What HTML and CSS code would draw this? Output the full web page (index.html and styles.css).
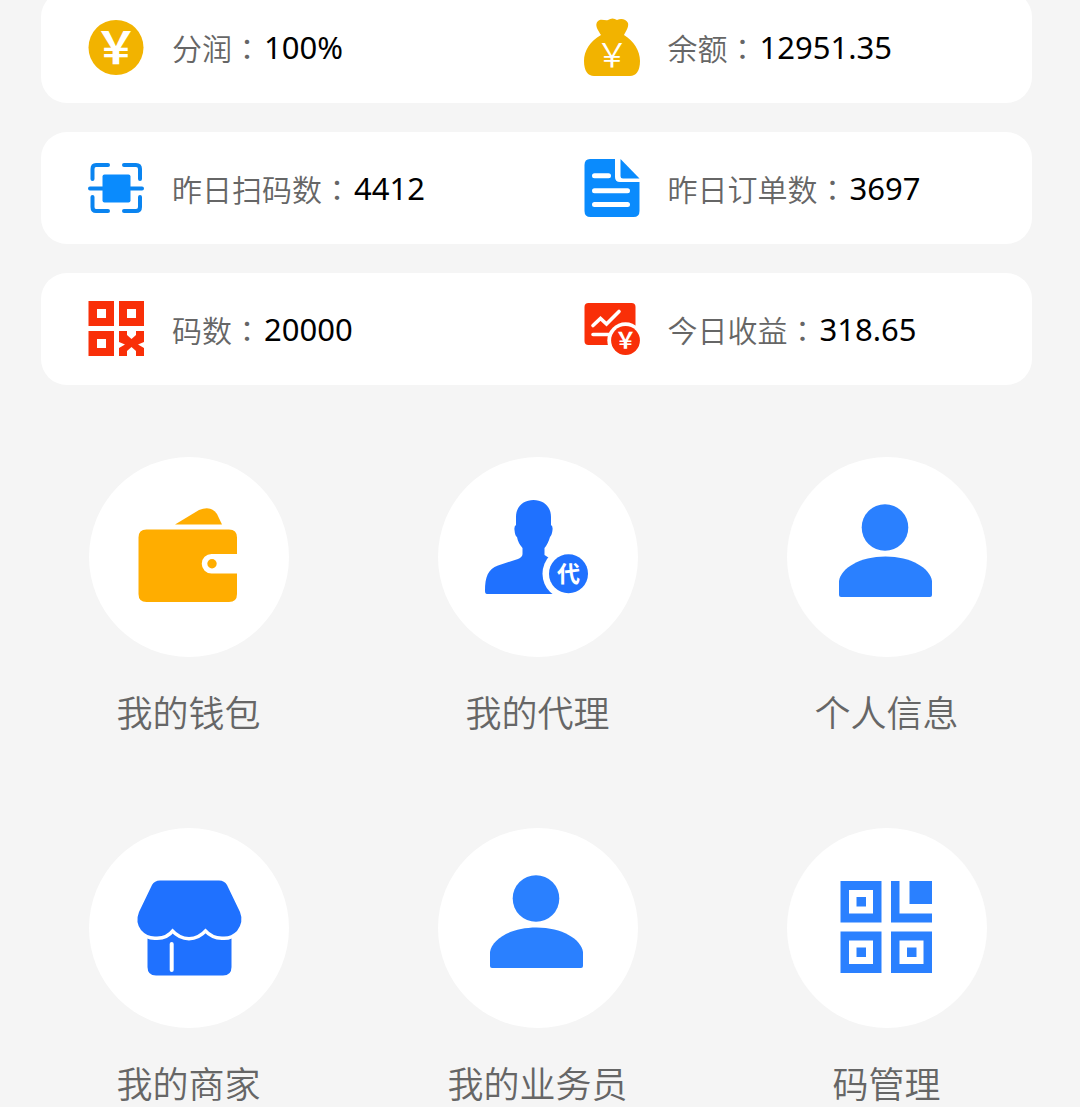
FILE: index.html
```html
<!DOCTYPE html>
<html lang="zh-CN">
<head>
    <meta charset="UTF-8">
    <meta name="viewport" content="width=device-width, initial-scale=1.0">
    <title>我的</title>
    <link rel="stylesheet" href="styles.css">
</head>
<body>
    <svg class="sprite" aria-hidden="true">
        <symbol id="person" viewBox="0 0 200 200">
            <circle cx="98" cy="70.5" r="23.3"/>
            <path d="M52 124C54 111 73 99.5 98.500 99.5S143 111 145 124V138Q145 140 143 140H54Q52 140 52 138Z"/>
        </symbol>
    </svg>

    <main>
        <section class="stats">
            <div class="card">
                <div class="stat">
                    <svg class="stat-icon gold" viewBox="0 0 56 56" aria-hidden="true">
                        <circle cx="28" cy="28.500" r="27.5"/>
                        <text class="yen" x="28" y="45" font-size="44">￥</text>
                    </svg>
                    <p><span class="label">分润<span class="colon" lang="zh-TW">：</span></span><span class="value">100%</span></p>
                </div>
                <div class="stat">
                    <svg class="stat-icon gold" viewBox="0 0 56 56" aria-hidden="true">
                        <path d="M17 16C14 11 10 6 14 2C17 -1 21 2 24 1C27 -1 30 -1 33 1C37 -1 42 0 44 4C45 8 42 12 40 16C50 22 56 32 56 42C56 52 52 57 46 57H10C4 57 0 52 0 42C0 32 6 22 17 16Z"/>
                        <text class="yen thin" x="28" y="48" font-size="33">￥</text>
                    </svg>
                    <p><span class="label">余额<span class="colon" lang="zh-TW">：</span></span><span class="value">12951.35</span></p>
                </div>
            </div>
            <div class="card">
                <div class="stat">
                    <svg class="stat-icon azure" viewBox="0 0 56 56" aria-hidden="true">
                        <path class="line" stroke-width="4" d="M20 5H8Q4.500 5 4.500 9V19M36 5H48Q52 5 52 9V19M4.500 37V47Q4.500 51 8 51H20M52 37V47Q52 51 48 51H36M2 28.500H54"/>
                        <rect x="14.500" y="14.500" width="28" height="28" rx="2"/>
                    </svg>
                    <p><span class="label">昨日扫码数<span class="colon" lang="zh-TW">：</span></span><span class="value">4412</span></p>
                </div>
                <div class="stat">
                    <svg class="stat-icon azure" viewBox="0 0 56 56" aria-hidden="true">
                        <path d="M6 -1H31V17Q31 22 36 22H55.500V51Q55.500 57 49.500 57H6.500Q.5 57 .5 51V5Q.5 -1 6 -1Z"/>
                        <path d="M36.500 -1L55.500 18.500H39Q36.500 18.500 36.500 16Z"/>
                        <path class="cut" stroke-width="5" d="M10.500 15.700H24.500M10.500 30.700H43.500M10.500 44.500H43.500"/>
                    </svg>
                    <p><span class="label">昨日订单数<span class="colon" lang="zh-TW">：</span></span><span class="value">3697</span></p>
                </div>
            </div>
            <div class="card">
                <div class="stat">
                    <svg class="stat-icon red" viewBox="0 0 56 56" aria-hidden="true">
                        <path fill-rule="evenodd" d="M.5 0H26V25H.5ZM9 8V17H18V8ZM31 0H56V25H31ZM39 8V17H48V8ZM.5 30H26V55H.5ZM9 38V47H18V38Z"/>
                        <path d="M31 30H39V34L43.500 38L48 34V30H56V41L50 43.500L56 47V55H48V50L43.500 46L39 50V55H31V47L37 43.500L31 41Z"/>
                    </svg>
                    <p><span class="label">码数<span class="colon" lang="zh-TW">：</span></span><span class="value">20000</span></p>
                </div>
                <div class="stat">
                    <svg class="stat-icon red" viewBox="0 0 56 56" aria-hidden="true">
                        <rect x=".5" y="2" width="51" height="42" rx="4"/>
                        <path class="cut" stroke-width="3.6" d="M9 24.500L16.500 17.500L22.500 23L35 10.500M9 33.500H27"/>
                        <circle class="ring" cx="41.500" cy="39.500" r="18.200"/>
                        <circle cx="41.500" cy="39.500" r="14.400"/>
                        <text class="yen" x="41.500" y="47" font-size="22">￥</text>
                    </svg>
                    <p><span class="label">今日收益<span class="colon" lang="zh-TW">：</span></span><span class="value">318.65</span></p>
                </div>
            </div>
        </section>

        <nav class="menu">
            <a class="menu-item" href="#wallet">
                <svg class="menu-icon orange" viewBox="0 0 200 200" aria-hidden="true">
                    <path d="M86 67.500L110 53Q122 48 128 57L133 67.500Z"/>
                    <path d="M57.500 72.500H140Q148 72.500 148 80.500V97H122.500A9.700 9.700 0 0 0 122.500 116.500H148V137Q148 145 140 145H57.500Q49.500 145 49.500 137V80.500Q49.500 72.500 57.500 72.500Z"/>
                    <circle cx="123" cy="106.700" r="4.700"/>
                </svg>
                <span>我的钱包</span>
            </a>
            <a class="menu-item" href="#agent">
                <svg class="menu-icon royal" viewBox="0 0 200 200" aria-hidden="true">
                    <path d="M95.500 43C105 43 113 49 113 60V68Q115 69 114.500 73Q114 78 112 80Q110 87 106.500 91V98L122 108V137H49Q47 137 47 134C47 120 50 112 60 108.500L80 102Q84.500 100 84.500 97V91Q80 86 79 80Q77 79 76.500 73Q76 69 78 68V60C78 49 86 43 95.500 43Z"/>
                    <circle class="ring" cx="130.500" cy="116.700" r="26"/>
                    <circle cx="130.500" cy="116.700" r="19.500"/>
                    <text class="badge" x="130.500" y="125" font-size="23">代</text>
                </svg>
                <span>我的代理</span>
            </a>
            <a class="menu-item" href="#profile">
                <svg class="menu-icon blue" viewBox="0 0 200 200" aria-hidden="true"><use href="#person"/></svg>
                <span>个人信息</span>
            </a>
            <a class="menu-item" href="#shop">
                <svg class="menu-icon royal" viewBox="0 0 200 200" aria-hidden="true">
                    <path d="M58.500 100H142.500V139Q142.500 147.500 134 147.500H67Q58.500 147.500 58.500 139Z"/>
                    <path class="awning" d="M71 52.500H130Q135.500 52.500 138 57L151 84Q155 94 148 103Q142 109 134 108.500Q124 109 116.500 100.500Q109 109 100 109Q91 109 83.500 100.500Q77 109 67 108.500Q58 109 52 102Q46 94 50 84L63 57Q65.500 52.500 71 52.500Z"/>
                    <path class="cut" stroke-width="4" d="M82.700 116V142"/>
                </svg>
                <span>我的商家</span>
            </a>
            <a class="menu-item" href="#salesman">
                <svg class="menu-icon blue" viewBox="0 0 200 200" aria-hidden="true"><use href="#person"/></svg>
                <span>我的业务员</span>
            </a>
            <a class="menu-item" href="#codes">
                <svg class="menu-icon blue" viewBox="0 0 200 200" aria-hidden="true">
                    <path fill-rule="evenodd" d="M53.500 53H94.500V94.500H53.500ZM62 62V85.500H86V62ZM53.500 103.500H94.500V145H53.500ZM62 112.500V136H86V112.500ZM104 103.500H145V145H104ZM112.500 112.500V136H136.500V112.500Z"/>
                    <path d="M104 53H112.500V85.500H145V94.500H104ZM122.500 53H145V76H122.500ZM69.500 69H79V78.500H69.500ZM69.500 119.500H79V129H69.500ZM120 119.500H129.500V129H120Z"/>
                </svg>
                <span>码管理</span>
            </a>
        </nav>
    </main>
</body>
</html>
```

FILE: styles.css
```css
* {
    box-sizing: border-box;
}
body {
    margin: 0;
    background-color: #f5f5f5;
    color: #666;
    font-family: "Noto Sans", "Noto Sans CJK SC", sans-serif;
}
main {
    display: flow-root;
    padding-bottom: 24px;
}
p {
    margin: 0;
}
.sprite {
    display: none;
}

/* stat cards */
.stats {
    display: flex;
    flex-direction: column;
    gap: 29px;
    margin-top: -9px;
    padding: 0 48px 0 41px;
}
.card {
    display: grid;
    grid-template-columns: 1fr 1fr;
    padding: 28px 0;
    background-color: #fff;
    border-radius: 26px;
}
.stat {
    display: flex;
    align-items: center;
    gap: 28px;
    padding-left: 47px;
    font-size: 31px;
    line-height: 56px;
    white-space: nowrap;
}
.stat p {
    display: flex;
    align-items: center;
    gap: 2px;
}
.stat-icon {
    flex: none;
    width: 56px;
    height: 56px;
    overflow: visible;
}
.label {
    font-family: "Noto Sans CJK SC", sans-serif;
    font-size: 30px;
    font-weight: 350;
}
/* the TC face centres the full-width colon */
.colon {
    font-family: "Noto Sans CJK TC", sans-serif;
}
.value {
    color: #000;
}

/* menu */
.menu {
    display: grid;
    grid-template-columns: repeat(3, 1fr);
    row-gap: 95px;
    padding: 72px 19px 0 14px;
}
.menu-item {
    display: flex;
    flex-direction: column;
    align-items: center;
    gap: 32px;
    color: #666;
    font-family: "Noto Sans CJK SC", sans-serif;
    font-size: 36px;
    font-weight: 350;
    line-height: 44px;
    text-decoration: none;
}
.menu-icon {
    width: 200px;
    height: 200px;
    background-color: #fff;
    border-radius: 50%;
}

/* icon colours */
.gold {
    fill: #f2b300;
}
.azure {
    fill: #0a8bfd;
}
.red {
    fill: #f92f08;
}
.orange {
    fill: #ffad00;
}
.royal {
    fill: #1f71ff;
}
.blue {
    fill: #2a80ff;
}
.line {
    fill: none;
    stroke: #0a84f0;
    stroke-linecap: round;
}
.cut {
    fill: none;
    stroke: #fff;
    stroke-linecap: round;
}
.ring {
    fill: #fff;
}
.awning {
    stroke: #fff;
    stroke-width: 7px;
    paint-order: stroke;
}
.yen, .badge {
    fill: #fff;
    font-weight: 700;
    text-anchor: middle;
}
.yen {
    font-family: "Noto Sans CJK SC", sans-serif;
}
.thin {
    font-weight: 350;
}
```
